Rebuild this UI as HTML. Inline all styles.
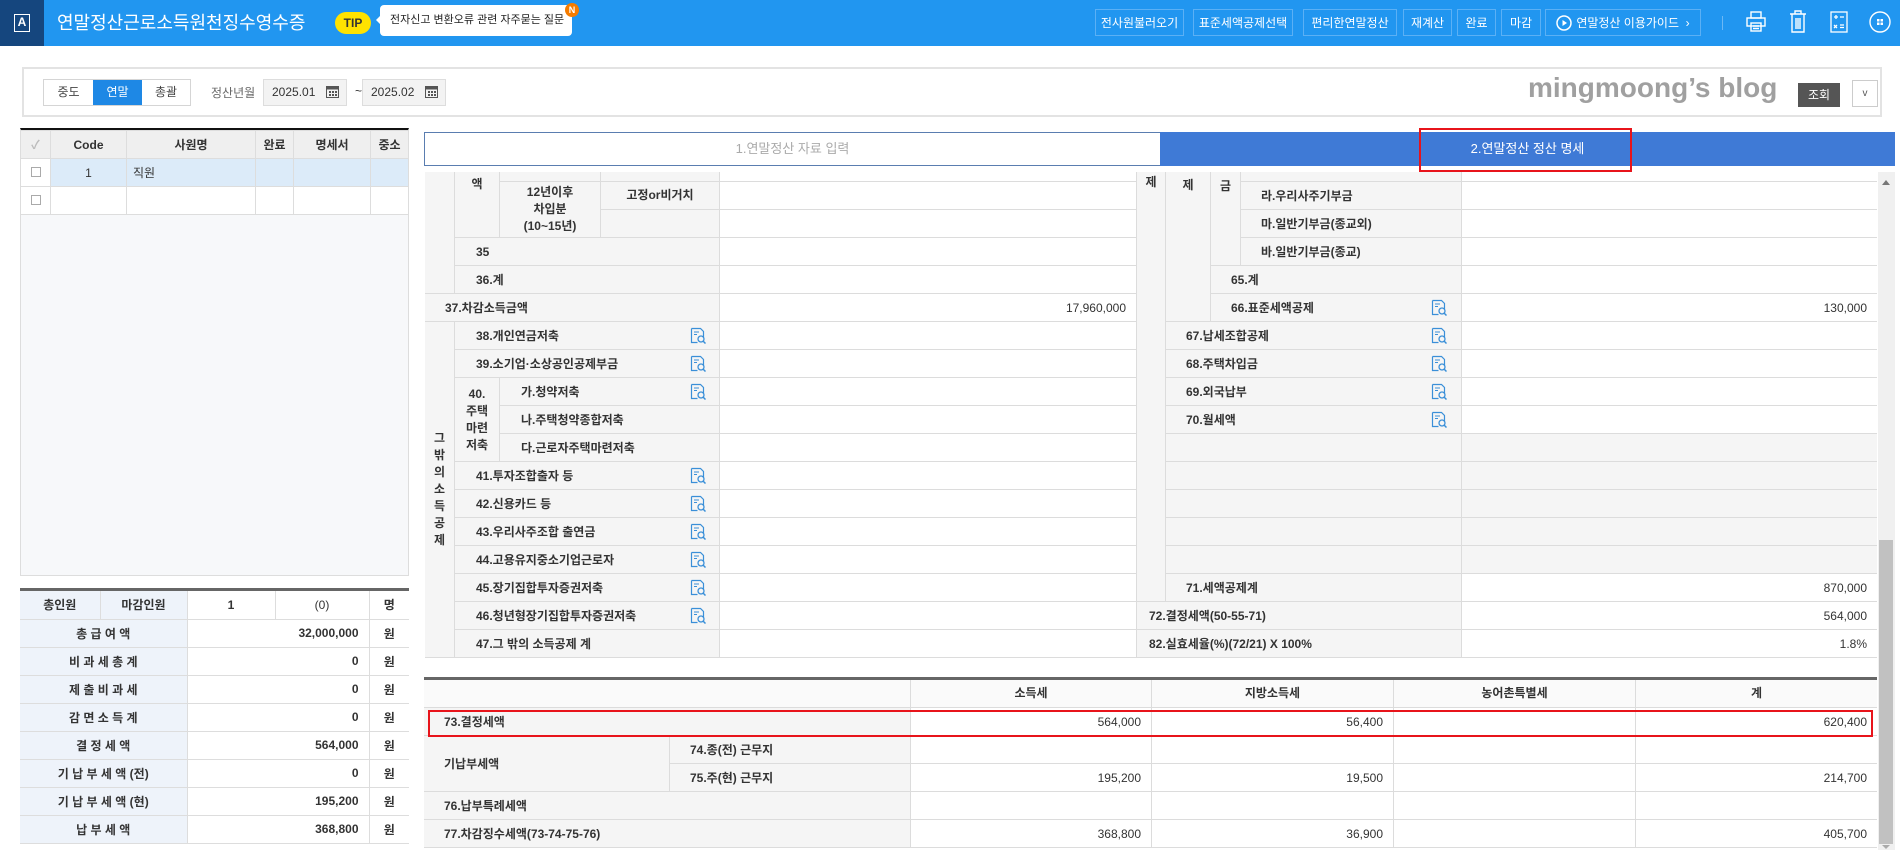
<!DOCTYPE html>
<html><head><meta charset="utf-8">
<style>
*{margin:0;padding:0;box-sizing:border-box}
body{width:1900px;height:856px;position:relative;background:#fff;font-family:"Liberation Sans","Noto Sans CJK KR",sans-serif;font-size:12px;color:#333;overflow:hidden}
.a{position:absolute}
.hb{position:absolute;top:9px;height:27px;border:1px solid #5bb0f5;color:#fff;font-size:12px;display:flex;align-items:center;justify-content:center;white-space:nowrap}
.c{position:absolute;border-right:1px solid #dcdcdc;border-bottom:1px solid #dcdcdc;background:#f5f5f5;display:flex;align-items:center;font-weight:bold;color:#333;white-space:nowrap;overflow:hidden}
.v{position:absolute;border-bottom:1px solid #dcdcdc;background:#fff;display:flex;align-items:center;justify-content:flex-end;padding-right:10px;color:#333}
.ctr{justify-content:center;text-align:center;line-height:17px}
.ic{position:absolute;width:16px;height:17px}
.g td{border:1px solid #ddd;height:28px}
</style></head><body>
<div class="a" style="left:0;top:0;width:1900px;height:46px;background:#2196f0"></div>
<div class="a" style="left:0;top:0;width:44px;height:46px;background:#15467e"></div>
<div class="a" style="left:14px;top:14px;width:16px;height:18px;border:1.5px solid #fff;color:#fff;font-size:12px;font-weight:bold;text-align:center;line-height:15px">A</div>
<div class="a" style="left:57px;top:10px;color:#fff;font-size:18px;line-height:26px">연말정산근로소득원천징수영수증</div>
<div class="a" style="left:335px;top:12px;width:36px;height:22px;background:#ffe200;border-radius:11px;color:#333;font-size:12px;font-weight:bold;text-align:center;line-height:22px">TIP</div>
<div class="a" style="left:380px;top:5px;width:192px;height:31px;background:#fff;border-radius:4px;font-size:11px;color:#222;line-height:31px;padding-left:10px">전자신고 변환오류 관련 자주묻는 질문</div>
<div class="a" style="left:376px;top:15px;width:0;height:0;border-top:5px solid transparent;border-bottom:5px solid transparent;border-right:5px solid #fff"></div>
<div class="a" style="left:565px;top:3px;width:14px;height:14px;border-radius:7px;background:#f57c00;color:#fff;font-size:9px;font-weight:bold;text-align:center;line-height:14px">N</div>
<div class="hb" style="left:1095px;width:89px">전사원불러오기</div>
<div class="hb" style="left:1193px;width:100px">표준세액공제선택</div>
<div class="hb" style="left:1303px;width:94px">편리한연말정산</div>
<div class="hb" style="left:1403px;width:49px">재계산</div>
<div class="hb" style="left:1457px;width:39px">완료</div>
<div class="hb" style="left:1501px;width:40px">마감</div>
<div class="hb" style="left:1545px;width:156px"><svg width="16" height="16" style="margin-right:4px"><circle cx="8" cy="8" r="7" fill="none" stroke="#fff" stroke-width="1.5"/><path d="M6.5 5v6l4.5-3z" fill="#fff"/></svg>연말정산 이용가이드 &nbsp;›</div>
<div class="a" style="left:1722px;top:16px;width:1px;height:14px;background:#6cb8f5"></div>
<svg class="a" style="left:1746px;top:11px" width="20" height="22" fill="none" stroke="#fff" stroke-width="1.4"><rect x="5" y="1" width="10" height="6"/><rect x="1" y="7" width="18" height="8"/><rect x="5" y="12" width="10" height="8"/><path d="M7 15h6M7 17.5h6"/></svg>
<svg class="a" style="left:1789px;top:10px" width="18" height="23" fill="none" stroke="#fff" stroke-width="1.4"><path d="M1 4h16M6 4V1h6v3M3 4v18h12V4M7 8v11M9 8v11M11 8v11"/></svg>
<svg class="a" style="left:1830px;top:11px" width="18" height="22" fill="none" stroke="#fff" stroke-width="1.3"><rect x="1" y="1" width="16" height="20"/><path d="M4 6h4M6 4v4M10 6h4M4 14l3 3M7 14l-3 3M10 14h4M10 16.5h4"/></svg>
<svg class="a" style="left:1869px;top:11px" width="22" height="22" fill="none" stroke="#fff" stroke-width="1.4"><circle cx="11" cy="11" r="10"/><g fill="#fff" stroke="none"><rect x="8" y="8" width="2.5" height="2.5"/><rect x="11.5" y="8" width="2.5" height="2.5"/><rect x="8" y="11.5" width="2.5" height="2.5"/><rect x="11.5" y="11.5" width="2.5" height="2.5"/></g></svg>

<div class="a" style="left:22px;top:67px;width:1860px;height:50px;border:2px solid #e3e3e3"></div>
<div class="a" style="left:43px;top:79px;width:148px;height:27px;border:1px solid #d5d5d5;display:flex;font-size:12px">
<div style="width:49px;text-align:center;line-height:25px;color:#444">중도</div>
<div style="width:49px;text-align:center;line-height:25px;color:#fff;background:#1e88e5">연말</div>
<div style="width:48px;text-align:center;line-height:25px;color:#444">총괄</div></div>
<div class="a" style="left:211px;top:84px;color:#666;font-size:12px">정산년월</div>
<div class="a" style="left:263px;top:79px;width:84px;height:27px;border:1px solid #ddd;background:#f3f3f3;font-size:12px;line-height:25px;padding-left:8px">2025.01</div>
<div class="a" style="left:355px;top:84px;font-size:12px">~</div>
<div class="a" style="left:362px;top:79px;width:84px;height:27px;border:1px solid #ddd;background:#f3f3f3;font-size:12px;line-height:25px;padding-left:8px">2025.02</div>
<svg class="a" style="left:326px;top:85px" width="13" height="13"><rect x="0.5" y="1.5" width="12" height="11" fill="none" stroke="#555"/><rect x="0.5" y="1.5" width="12" height="3" fill="#555"/><g fill="#555"><rect x="3" y="6" width="2" height="2"/><rect x="6" y="6" width="2" height="2"/><rect x="9" y="6" width="2" height="2"/><rect x="3" y="9" width="2" height="2"/><rect x="6" y="9" width="2" height="2"/><rect x="9" y="9" width="2" height="2"/></g></svg>
<svg class="a" style="left:425px;top:85px" width="13" height="13"><rect x="0.5" y="1.5" width="12" height="11" fill="none" stroke="#555"/><rect x="0.5" y="1.5" width="12" height="3" fill="#555"/><g fill="#555"><rect x="3" y="6" width="2" height="2"/><rect x="6" y="6" width="2" height="2"/><rect x="9" y="6" width="2" height="2"/><rect x="3" y="9" width="2" height="2"/><rect x="6" y="9" width="2" height="2"/><rect x="9" y="9" width="2" height="2"/></g></svg>
<div class="a" style="left:1528px;top:72px;font-size:28px;font-weight:bold;color:#a0a0a0;letter-spacing:0px">mingmoong’s blog</div>
<div class="a" style="left:1798px;top:83px;width:42px;height:24px;background:#555;color:#fff;font-size:12px;text-align:center;line-height:24px">조회</div>
<div class="a" style="left:1852px;top:80px;width:26px;height:27px;border:1px solid #ccc;background:#fff;font-size:10px;text-align:center;line-height:25px;color:#555">v</div>

<div class="a" style="left:20px;top:128px;width:389px;height:448px;border:1px solid #ddd;border-top:2px solid #111;background:#f7f8fa"></div>
<table class="a g" style="left:20px;top:130px;border-collapse:collapse;width:389px;font-size:12px;text-align:center">
<tr style="background:#efefef;font-weight:bold"><td style="width:30px;color:#bbb">✓</td><td style="width:76px">Code</td><td style="width:129px">사원명</td><td style="width:38px">완료</td><td style="width:77px">명세서</td><td>중소</td></tr>
<tr style="background:#dcebf9"><td style="background:#fff"><span style="display:inline-block;width:10px;height:10px;border:1px solid #aaa"></span></td><td>1</td><td style="text-align:left;padding-left:6px">직원</td><td></td><td></td><td></td></tr>
<tr style="background:#fff"><td><span style="display:inline-block;width:10px;height:10px;border:1px solid #aaa"></span></td><td></td><td></td><td></td><td></td><td></td></tr>
</table>

<div class="a" style="left:20px;top:588px;width:389px;height:3px;background:#666"></div>
<table class="a" style="left:20px;top:591px;border-collapse:collapse;width:389px;font-size:12px;font-weight:bold">
<colgroup><col style="width:80px"><col style="width:87px"><col style="width:88px"><col style="width:94px"><col></colgroup>
<tr style="height:28px"><td style="background:#eef3fa;text-align:center;border-bottom:1px solid #ddd;border-right:1px solid #ddd">총인원</td><td style="background:#eef3fa;text-align:center;border-bottom:1px solid #ddd;border-right:1px solid #ddd">마감인원</td><td style="text-align:center;border-bottom:1px solid #ddd;border-right:1px solid #ddd">1</td><td style="text-align:center;border-bottom:1px solid #ddd;border-right:1px solid #ddd;font-weight:normal">(0)</td><td style="text-align:center;border-bottom:1px solid #ddd">명</td></tr>
<tr style="height:28px"><td colspan="2" style="background:#eef3fa;text-align:center;border-bottom:1px solid #ddd;border-right:1px solid #ddd">총 급 여 액</td><td colspan="2" style="text-align:right;padding-right:10px;border-bottom:1px solid #ddd;border-right:1px solid #ddd">32,000,000</td><td style="text-align:center;border-bottom:1px solid #ddd">원</td></tr>
<tr style="height:28px"><td colspan="2" style="background:#eef3fa;text-align:center;border-bottom:1px solid #ddd;border-right:1px solid #ddd">비 과 세 총 계</td><td colspan="2" style="text-align:right;padding-right:10px;border-bottom:1px solid #ddd;border-right:1px solid #ddd">0</td><td style="text-align:center;border-bottom:1px solid #ddd">원</td></tr>
<tr style="height:28px"><td colspan="2" style="background:#eef3fa;text-align:center;border-bottom:1px solid #ddd;border-right:1px solid #ddd">제 출 비 과 세</td><td colspan="2" style="text-align:right;padding-right:10px;border-bottom:1px solid #ddd;border-right:1px solid #ddd">0</td><td style="text-align:center;border-bottom:1px solid #ddd">원</td></tr>
<tr style="height:28px"><td colspan="2" style="background:#eef3fa;text-align:center;border-bottom:1px solid #ddd;border-right:1px solid #ddd">감 면 소 득 계</td><td colspan="2" style="text-align:right;padding-right:10px;border-bottom:1px solid #ddd;border-right:1px solid #ddd">0</td><td style="text-align:center;border-bottom:1px solid #ddd">원</td></tr>
<tr style="height:28px"><td colspan="2" style="background:#eef3fa;text-align:center;border-bottom:1px solid #ddd;border-right:1px solid #ddd">결 정 세 액</td><td colspan="2" style="text-align:right;padding-right:10px;border-bottom:1px solid #ddd;border-right:1px solid #ddd">564,000</td><td style="text-align:center;border-bottom:1px solid #ddd">원</td></tr>
<tr style="height:28px"><td colspan="2" style="background:#eef3fa;text-align:center;border-bottom:1px solid #ddd;border-right:1px solid #ddd">기 납 부 세 액 (전)</td><td colspan="2" style="text-align:right;padding-right:10px;border-bottom:1px solid #ddd;border-right:1px solid #ddd">0</td><td style="text-align:center;border-bottom:1px solid #ddd">원</td></tr>
<tr style="height:28px"><td colspan="2" style="background:#eef3fa;text-align:center;border-bottom:1px solid #ddd;border-right:1px solid #ddd">기 납 부 세 액 (현)</td><td colspan="2" style="text-align:right;padding-right:10px;border-bottom:1px solid #ddd;border-right:1px solid #ddd">195,200</td><td style="text-align:center;border-bottom:1px solid #ddd">원</td></tr>
<tr style="height:28px"><td colspan="2" style="background:#eef3fa;text-align:center;border-bottom:1px solid #ddd;border-right:1px solid #ddd">납 부 세 액</td><td colspan="2" style="text-align:right;padding-right:10px;border-bottom:1px solid #ddd;border-right:1px solid #ddd">368,800</td><td style="text-align:center;border-bottom:1px solid #ddd">원</td></tr>
</table>

<div class="a" style="left:424px;top:132px;width:736px;height:34px;border:1px solid #5a7db0;border-right:none;background:#fff;color:#aaa;font-size:13px;text-align:center;line-height:32px">1.연말정산 자료 입력</div>
<div class="a" style="left:1160px;top:132px;width:735px;height:34px;background:#3f7ad6;color:#fff;font-size:13px;text-align:center;line-height:34px">2.연말정산 정산 명세</div>
<div class="a" style="left:1419px;top:128px;width:213px;height:44px;border:2px solid #e8141b"></div>

<div class="a" style="left:424px;top:172px;width:1453px;height:486px;background:#fff;overflow:hidden">
<div style="position:absolute;left:-424px;top:-172px;width:1900px;height:700px">
<div class="c" style="left:425px;top:172px;width:30px;height:122px"></div>
<div class="c ctr" style="left:455px;top:172px;width:45px;height:66px;align-items:flex-start;padding-top:4px">액</div>
<div class="c" style="left:500px;top:172px;width:101px;height:10px"></div>
<div class="c" style="left:601px;top:172px;width:119px;height:10px"></div>
<div class="v" style="left:720px;top:172px;width:416px;height:10px"></div>
<div class="c ctr" style="left:500px;top:182px;width:101px;height:56px">12년이후<br>차입분<br>(10~15년)</div>
<div class="c ctr" style="left:601px;top:182px;width:119px;height:28px">고정or비거치</div>
<div class="c" style="left:601px;top:210px;width:119px;height:28px"></div>
<div class="v" style="left:720px;top:182px;width:416px;height:28px"></div>
<div class="v" style="left:720px;top:210px;width:416px;height:28px"></div>
<div class="c" style="left:455px;top:238px;width:265px;height:28px;padding-left:21px">35</div><div class="v" style="left:720px;top:238px;width:416px;height:28px"></div>
<div class="c" style="left:455px;top:266px;width:265px;height:28px;padding-left:21px">36.계</div><div class="v" style="left:720px;top:266px;width:416px;height:28px"></div>
<div class="c" style="left:425px;top:294px;width:295px;height:28px;padding-left:20px">37.차감소득금액</div><div class="v" style="left:720px;top:294px;width:416px;height:28px">17,960,000</div>
<div class="c ctr" style="left:425px;top:322px;width:30px;height:336px">그<br>밖<br>의<br>소<br>득<br>공<br>제</div>
<div class="c" style="left:455px;top:322px;width:265px;height:28px;padding-left:21px">38.개인연금저축</div><div class="v" style="left:720px;top:322px;width:416px;height:28px"></div>
<div class="c" style="left:455px;top:350px;width:265px;height:28px;padding-left:21px">39.소기업·소상공인공제부금</div><div class="v" style="left:720px;top:350px;width:416px;height:28px"></div>
<div class="c ctr" style="left:455px;top:378px;width:45px;height:84px">40.<br>주택<br>마련<br>저축</div>
<div class="c" style="left:500px;top:378px;width:220px;height:28px;padding-left:21px">가.청약저축</div><div class="v" style="left:720px;top:378px;width:416px;height:28px"></div>
<div class="c" style="left:500px;top:406px;width:220px;height:28px;padding-left:21px">나.주택청약종합저축</div><div class="v" style="left:720px;top:406px;width:416px;height:28px"></div>
<div class="c" style="left:500px;top:434px;width:220px;height:28px;padding-left:21px">다.근로자주택마련저축</div><div class="v" style="left:720px;top:434px;width:416px;height:28px"></div>
<div class="c" style="left:455px;top:462px;width:265px;height:28px;padding-left:21px">41.투자조합출자 등</div><div class="v" style="left:720px;top:462px;width:416px;height:28px"></div>
<div class="c" style="left:455px;top:490px;width:265px;height:28px;padding-left:21px">42.신용카드 등</div><div class="v" style="left:720px;top:490px;width:416px;height:28px"></div>
<div class="c" style="left:455px;top:518px;width:265px;height:28px;padding-left:21px">43.우리사주조합 출연금</div><div class="v" style="left:720px;top:518px;width:416px;height:28px"></div>
<div class="c" style="left:455px;top:546px;width:265px;height:28px;padding-left:21px">44.고용유지중소기업근로자</div><div class="v" style="left:720px;top:546px;width:416px;height:28px"></div>
<div class="c" style="left:455px;top:574px;width:265px;height:28px;padding-left:21px">45.장기집합투자증권저축</div><div class="v" style="left:720px;top:574px;width:416px;height:28px"></div>
<div class="c" style="left:455px;top:602px;width:265px;height:28px;padding-left:21px">46.청년형장기집합투자증권저축</div><div class="v" style="left:720px;top:602px;width:416px;height:28px"></div>
<div class="c" style="left:455px;top:630px;width:265px;height:28px;padding-left:21px">47.그 밖의 소득공제 계</div><div class="v" style="left:720px;top:630px;width:416px;height:28px"></div>
<div class="c ctr" style="left:1136px;top:172px;width:30px;height:430px;align-items:flex-start;padding-top:2px;border-left:1px solid #dcdcdc">제</div>
<div class="c ctr" style="left:1166px;top:172px;width:45px;height:150px;align-items:flex-start;padding-top:5px">제</div>
<div class="c ctr" style="left:1211px;top:172px;width:30px;height:94px;align-items:flex-start;padding-top:6px">금</div>
<div class="c" style="left:1241px;top:172px;width:221px;height:10px"></div><div class="v" style="left:1462px;top:172px;width:415px;height:10px"></div>
<div class="c" style="left:1241px;top:182px;width:221px;height:28px;padding-left:20px">라.우리사주기부금</div><div class="v" style="left:1462px;top:182px;width:415px;height:28px"></div>
<div class="c" style="left:1241px;top:210px;width:221px;height:28px;padding-left:20px">마.일반기부금(종교외)</div><div class="v" style="left:1462px;top:210px;width:415px;height:28px"></div>
<div class="c" style="left:1241px;top:238px;width:221px;height:28px;padding-left:20px">바.일반기부금(종교)</div><div class="v" style="left:1462px;top:238px;width:415px;height:28px"></div>
<div class="c" style="left:1211px;top:266px;width:251px;height:28px;padding-left:20px">65.계</div><div class="v" style="left:1462px;top:266px;width:415px;height:28px"></div>
<div class="c" style="left:1211px;top:294px;width:251px;height:28px;padding-left:20px">66.표준세액공제</div><div class="v" style="left:1462px;top:294px;width:415px;height:28px">130,000</div>
<div class="c" style="left:1166px;top:322px;width:296px;height:28px;padding-left:20px">67.납세조합공제</div><div class="v" style="left:1462px;top:322px;width:415px;height:28px"></div>
<div class="c" style="left:1166px;top:350px;width:296px;height:28px;padding-left:20px">68.주택차입금</div><div class="v" style="left:1462px;top:350px;width:415px;height:28px"></div>
<div class="c" style="left:1166px;top:378px;width:296px;height:28px;padding-left:20px">69.외국납부</div><div class="v" style="left:1462px;top:378px;width:415px;height:28px"></div>
<div class="c" style="left:1166px;top:406px;width:296px;height:28px;padding-left:20px">70.월세액</div><div class="v" style="left:1462px;top:406px;width:415px;height:28px"></div>
<div class="c" style="left:1166px;top:434px;width:296px;height:28px"></div><div class="c" style="left:1462px;top:434px;width:415px;height:28px;border-right:none"></div>
<div class="c" style="left:1166px;top:462px;width:296px;height:28px"></div><div class="c" style="left:1462px;top:462px;width:415px;height:28px;border-right:none"></div>
<div class="c" style="left:1166px;top:490px;width:296px;height:28px"></div><div class="c" style="left:1462px;top:490px;width:415px;height:28px;border-right:none"></div>
<div class="c" style="left:1166px;top:518px;width:296px;height:28px"></div><div class="c" style="left:1462px;top:518px;width:415px;height:28px;border-right:none"></div>
<div class="c" style="left:1166px;top:546px;width:296px;height:28px"></div><div class="c" style="left:1462px;top:546px;width:415px;height:28px;border-right:none"></div>
<div class="c" style="left:1166px;top:574px;width:296px;height:28px;padding-left:20px">71.세액공제계</div><div class="v" style="left:1462px;top:574px;width:415px;height:28px">870,000</div>
<div class="c" style="left:1136px;top:602px;width:326px;height:28px;padding-left:12px;border-left:1px solid #dcdcdc">72.결정세액(50-55-71)</div><div class="v" style="left:1462px;top:602px;width:415px;height:28px">564,000</div>
<div class="c" style="left:1136px;top:630px;width:326px;height:28px;padding-left:12px;border-left:1px solid #dcdcdc">82.실효세율(%)(72/21) X 100%</div><div class="v" style="left:1462px;top:630px;width:415px;height:28px">1.8%</div>
</div></div>

<svg width="0" height="0" style="position:absolute"><defs><g id="ico"><path d="M1.5 1.5h9l3 3V10" fill="none" stroke="#3a8fd8" stroke-width="1.2"/><path d="M1.5 1.5v14h6" fill="none" stroke="#3a8fd8" stroke-width="1.2"/><path d="M4 5h5M4 7.5h3" stroke="#3a8fd8" stroke-width="1.1"/><circle cx="11" cy="12" r="3" fill="none" stroke="#3a8fd8" stroke-width="1.3"/><path d="M13 14l2.5 2.5" stroke="#3a8fd8" stroke-width="1.5"/></g></defs></svg>
<svg class="ic" style="left:690px;top:327px"><use href="#ico"/></svg>
<svg class="ic" style="left:690px;top:355px"><use href="#ico"/></svg>
<svg class="ic" style="left:690px;top:383px"><use href="#ico"/></svg>
<svg class="ic" style="left:690px;top:467px"><use href="#ico"/></svg>
<svg class="ic" style="left:690px;top:495px"><use href="#ico"/></svg>
<svg class="ic" style="left:690px;top:523px"><use href="#ico"/></svg>
<svg class="ic" style="left:690px;top:551px"><use href="#ico"/></svg>
<svg class="ic" style="left:690px;top:579px"><use href="#ico"/></svg>
<svg class="ic" style="left:690px;top:607px"><use href="#ico"/></svg>
<svg class="ic" style="left:1431px;top:299px"><use href="#ico"/></svg>
<svg class="ic" style="left:1431px;top:327px"><use href="#ico"/></svg>
<svg class="ic" style="left:1431px;top:355px"><use href="#ico"/></svg>
<svg class="ic" style="left:1431px;top:383px"><use href="#ico"/></svg>
<svg class="ic" style="left:1431px;top:411px"><use href="#ico"/></svg>

<div class="a" style="left:424px;top:677px;width:1453px;height:3px;background:#666"></div>
<div class="a" style="left:424px;top:680px;width:1453px;height:168px">
<div style="position:absolute;left:-424px;top:-680px">
<div class="c" style="left:424px;top:680px;width:487px;height:28px;background:#fafafa"></div>
<div class="c ctr" style="left:911px;top:680px;width:241px;height:28px;background:#fafafa">소득세</div>
<div class="c ctr" style="left:1152px;top:680px;width:242px;height:28px;background:#fafafa">지방소득세</div>
<div class="c ctr" style="left:1394px;top:680px;width:242px;height:28px;background:#fafafa">농어촌특별세</div>
<div class="c ctr" style="left:1636px;top:680px;width:241px;height:28px;background:#fafafa;border-right:none">계</div>
<div class="c" style="left:424px;top:708px;width:487px;height:28px;padding-left:20px">73.결정세액</div>
<div class="v" style="left:911px;top:708px;width:241px;height:28px;border-right:1px solid #dcdcdc">564,000</div>
<div class="v" style="left:1152px;top:708px;width:242px;height:28px;border-right:1px solid #dcdcdc">56,400</div>
<div class="v" style="left:1394px;top:708px;width:242px;height:28px;border-right:1px solid #dcdcdc"></div>
<div class="v" style="left:1636px;top:708px;width:241px;height:28px">620,400</div>
<div class="c" style="left:424px;top:736px;width:246px;height:56px;padding-left:20px">기납부세액</div>
<div class="c" style="left:670px;top:736px;width:241px;height:28px;padding-left:20px">74.종(전) 근무지</div>
<div class="v" style="left:911px;top:736px;width:241px;height:28px;border-right:1px solid #dcdcdc"></div>
<div class="v" style="left:1152px;top:736px;width:242px;height:28px;border-right:1px solid #dcdcdc"></div>
<div class="v" style="left:1394px;top:736px;width:242px;height:28px;border-right:1px solid #dcdcdc"></div>
<div class="v" style="left:1636px;top:736px;width:241px;height:28px"></div>
<div class="c" style="left:670px;top:764px;width:241px;height:28px;padding-left:20px">75.주(현) 근무지</div>
<div class="v" style="left:911px;top:764px;width:241px;height:28px;border-right:1px solid #dcdcdc">195,200</div>
<div class="v" style="left:1152px;top:764px;width:242px;height:28px;border-right:1px solid #dcdcdc">19,500</div>
<div class="v" style="left:1394px;top:764px;width:242px;height:28px;border-right:1px solid #dcdcdc"></div>
<div class="v" style="left:1636px;top:764px;width:241px;height:28px">214,700</div>
<div class="c" style="left:424px;top:792px;width:487px;height:28px;padding-left:20px">76.납부특례세액</div>
<div class="v" style="left:911px;top:792px;width:241px;height:28px;border-right:1px solid #dcdcdc"></div>
<div class="v" style="left:1152px;top:792px;width:242px;height:28px;border-right:1px solid #dcdcdc"></div>
<div class="v" style="left:1394px;top:792px;width:242px;height:28px;border-right:1px solid #dcdcdc"></div>
<div class="v" style="left:1636px;top:792px;width:241px;height:28px"></div>
<div class="c" style="left:424px;top:820px;width:487px;height:28px;padding-left:20px">77.차감징수세액(73-74-75-76)</div>
<div class="v" style="left:911px;top:820px;width:241px;height:28px;border-right:1px solid #dcdcdc">368,800</div>
<div class="v" style="left:1152px;top:820px;width:242px;height:28px;border-right:1px solid #dcdcdc">36,900</div>
<div class="v" style="left:1394px;top:820px;width:242px;height:28px;border-right:1px solid #dcdcdc"></div>
<div class="v" style="left:1636px;top:820px;width:241px;height:28px">405,700</div>
</div></div>
<div class="a" style="left:428px;top:710px;width:1445px;height:27px;border:2px solid #e8141b"></div>

<div class="a" style="left:1878px;top:172px;width:17px;height:678px;background:#f0f0f0"></div>
<div class="a" style="left:1882px;top:180px;width:0;height:0;border-left:4px solid transparent;border-right:4px solid transparent;border-bottom:5px solid #777"></div>
<div class="a" style="left:1879px;top:540px;width:14px;height:304px;background:#c1c1c1"></div>
<div class="a" style="left:1882px;top:845px;width:0;height:0;border-left:4px solid transparent;border-right:4px solid transparent;border-top:4px solid #aaa"></div>
</body></html>
